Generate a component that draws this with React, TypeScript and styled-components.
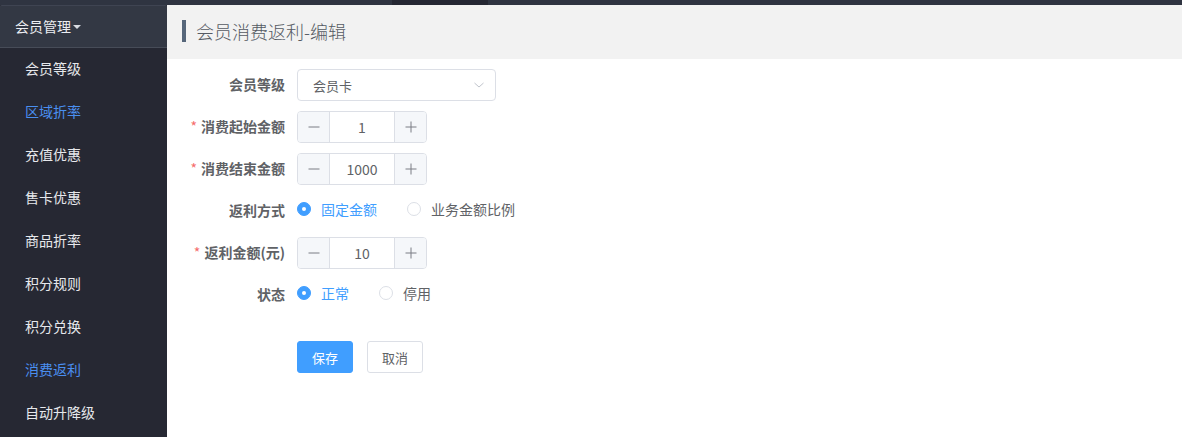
import { createGlobalStyle, styled } from 'styled-components';

const GlobalStyle = createGlobalStyle`
    html, body {
        margin: 0;
        padding: 0;
        background: #fff;
        font-family: "Noto Sans CJK SC", "Noto Sans", sans-serif;
    }
    * {
        box-sizing: border-box;
    }
`;

const Page = styled.div`
    width: 1182px;
    height: 437px;
    display: flex;
    flex-direction: column;
    overflow: hidden;
`;

const TopStrip = styled.div`
    height: 5px;
    flex-shrink: 0;
    background: #2f3441;
    display: flex;

    & .dark {
        margin-left: 392px;
        width: 96px;
        background: #252733;
    }
`;

const Body = styled.div`
    flex: 1;
    display: flex;
    min-height: 0;
`;

const Sidebar = styled.div`
    width: 167px;
    flex-shrink: 0;
    background: #262833;
    display: flex;
    flex-direction: column;
`;

const SidebarHeader = styled.div`
    height: 43px;
    flex-shrink: 0;
    background: #333844;
    border-top: 1px solid #3f4452;
    border-bottom: 1px solid #474c58;
    border-radius: 2px 2px 0 0;
    display: flex;
    align-items: center;
    padding-left: 15px;
    padding-bottom: 2px;
    color: #eceef2;
    font-size: 14px;

    & .caret {
        width: 0;
        height: 0;
        margin-left: 2px;
        margin-top: 2px;
        border-left: 4px solid transparent;
        border-right: 4px solid transparent;
        border-top: 4px solid #d8dae0;
    }
`;

const MenuItem = styled.div<{ $active?: boolean }>`
    height: 43px;
    flex-shrink: 0;
    display: flex;
    align-items: center;
    padding-left: 25px;
    padding-bottom: 3px;
    font-size: 14px;
    color: ${(p) => (p.$active ? '#4a8ff0' : '#e6e8ec')};
`;

const Main = styled.div`
    flex: 1;
    display: flex;
    flex-direction: column;
`;

const TitleBar = styled.div`
    height: 54px;
    flex-shrink: 0;
    background: #f2f2f2;
    display: flex;
    align-items: center;
    padding-left: 15px;
    padding-bottom: 2px;
`;

const Title = styled.div`
    border-left: 4px solid #56667a;
    padding-left: 10px;
    height: 22px;
    display: flex;
    align-items: center;
    font-size: 18px;
    font-weight: 300;
    color: #555a63;
`;

const Form = styled.div`
    padding-top: 10px;
    display: flex;
    flex-direction: column;
`;

const FormRow = styled.div`
    height: 32px;
    margin-bottom: 10px;
    display: flex;
    align-items: center;
`;

const Label = styled.div`
    width: 130px;
    padding-right: 12px;
    text-align: right;
    font-size: 14px;
    font-weight: 700;
    color: #606266;
    margin-top: -2px;

    & .req {
        color: #f56c6c;
        margin-right: 4px;
        font-weight: 400;
    }
`;

const Select = styled.div`
    width: 199px;
    height: 32px;
    border: 1px solid #dcdfe6;
    border-radius: 4px;
    display: flex;
    align-items: center;
    justify-content: space-between;
    padding: 0 10px 0 15px;
    font-size: 13px;
    color: #606266;
`;

const NumberInput = styled.div`
    width: 130px;
    height: 32px;
    border: 1px solid #dcdfe6;
    border-radius: 4px;
    display: flex;
    overflow: hidden;
`;

const StepButton = styled.div<{ $side: 'left' | 'right' }>`
    width: 32px;
    flex-shrink: 0;
    background: #f5f7fa;
    display: flex;
    align-items: center;
    justify-content: center;
    ${(p) =>
        p.$side === 'left'
            ? 'border-right: 1px solid #dcdfe6;'
            : 'border-left: 1px solid #dcdfe6;'}
`;

const NumberValue = styled.div`
    flex: 1;
    display: flex;
    align-items: center;
    justify-content: center;
    font-size: 14px;
    color: #606266;
`;

const RadioGroup = styled.div`
    display: flex;
    align-items: center;
    gap: 30px;
    margin-top: -5px;
`;

const Radio = styled.div<{ $checked?: boolean }>`
    display: flex;
    align-items: center;
    font-size: 14px;
    color: ${(p) => (p.$checked ? '#409eff' : '#606266')};

    & .dot {
        width: 14px;
        height: 14px;
        border-radius: 50%;
        margin-right: 10px;
        margin-top: 1px;
        display: flex;
        align-items: center;
        justify-content: center;
        border: 1px solid ${(p) => (p.$checked ? '#409eff' : '#dcdfe6')};
        background: ${(p) => (p.$checked ? '#409eff' : '#fff')};
    }

    & .dot::after {
        content: '';
        width: 4px;
        height: 4px;
        border-radius: 50%;
        background: #fff;
        display: ${(p) => (p.$checked ? 'block' : 'none')};
    }
`;

const Actions = styled.div`
    margin-top: 20px;
    padding-left: 130px;
    display: flex;
    gap: 14px;
`;

const Button = styled.div<{ $primary?: boolean }>`
    width: 56px;
    height: 32px;
    border-radius: 3px;
    display: flex;
    align-items: center;
    justify-content: center;
    font-size: 13px;
    border: 1px solid ${(p) => (p.$primary ? '#409eff' : '#dcdfe6')};
    background: ${(p) => (p.$primary ? '#409eff' : '#fff')};
    color: ${(p) => (p.$primary ? '#fff' : '#606266')};
`;

const menu = [
    '会员等级',
    '区域折率',
    '充值优惠',
    '售卡优惠',
    '商品折率',
    '积分规则',
    '积分兑换',
    '消费返利',
    '自动升降级',
];
const activeMenu = ['区域折率', '消费返利'];

function Stepper({ value }: { value: string }) {
    return (
        <NumberInput>
            <StepButton $side="left">
                <svg width="12" height="12" viewBox="0 0 12 12">
                    <path d="M0.5 6 H11.5" stroke="#7a7d84" strokeWidth="1" />
                </svg>
            </StepButton>
            <NumberValue>{value}</NumberValue>
            <StepButton $side="right">
                <svg width="12" height="12" viewBox="0 0 12 12">
                    <path d="M0.5 6 H11.5 M6 0.5 V11.5" stroke="#7a7d84" strokeWidth="1" />
                </svg>
            </StepButton>
        </NumberInput>
    );
}

export default function App() {
    return (
        <Page>
            <GlobalStyle />
            <TopStrip>
                <div className="dark" />
            </TopStrip>
            <Body>
                <Sidebar>
                    <SidebarHeader>
                        会员管理
                        <span className="caret" />
                    </SidebarHeader>
                    {menu.map((m) => (
                        <MenuItem key={m} $active={activeMenu.includes(m)}>
                            {m}
                        </MenuItem>
                    ))}
                </Sidebar>
                <Main>
                    <TitleBar>
                        <Title>会员消费返利-编辑</Title>
                    </TitleBar>
                    <Form>
                        <FormRow>
                            <Label>会员等级</Label>
                            <Select>
                                <span>会员卡</span>
                                <svg width="12" height="12" viewBox="0 0 12 12">
                                    <path
                                        d="M1.5 4 L6 8 L10.5 4"
                                        fill="none"
                                        stroke="#c0c4cc"
                                        strokeWidth="1"
                                    />
                                </svg>
                            </Select>
                        </FormRow>
                        <FormRow>
                            <Label>
                                <span className="req">*</span>消费起始金额
                            </Label>
                            <Stepper value="1" />
                        </FormRow>
                        <FormRow>
                            <Label>
                                <span className="req">*</span>消费结束金额
                            </Label>
                            <Stepper value="1000" />
                        </FormRow>
                        <FormRow>
                            <Label>返利方式</Label>
                            <RadioGroup>
                                <Radio $checked>
                                    <span className="dot" />
                                    固定金额
                                </Radio>
                                <Radio>
                                    <span className="dot" />
                                    业务金额比例
                                </Radio>
                            </RadioGroup>
                        </FormRow>
                        <FormRow>
                            <Label>
                                <span className="req">*</span>返利金额(元)
                            </Label>
                            <Stepper value="10" />
                        </FormRow>
                        <FormRow>
                            <Label>状态</Label>
                            <RadioGroup>
                                <Radio $checked>
                                    <span className="dot" />
                                    正常
                                </Radio>
                                <Radio>
                                    <span className="dot" />
                                    停用
                                </Radio>
                            </RadioGroup>
                        </FormRow>
                        <Actions>
                            <Button $primary>保存</Button>
                            <Button>取消</Button>
                        </Actions>
                    </Form>
                </Main>
            </Body>
        </Page>
    );
}
